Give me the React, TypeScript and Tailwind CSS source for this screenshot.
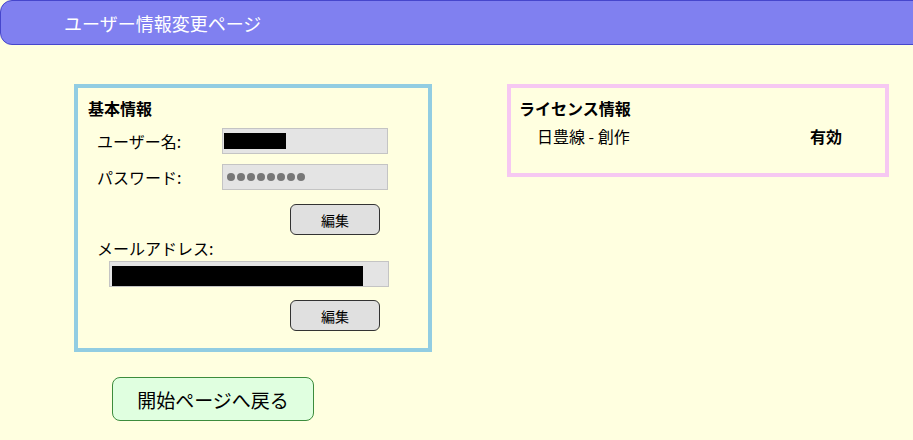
import React from "react";

const font = { fontFamily: '"Noto Sans CJK JP", "Noto Sans", sans-serif' };

function Field({ width, inset, children }: { width: string; inset: string; children?: React.ReactNode }) {
  return (
    <div className={`${width} ${inset} h-[26px] bg-[#e4e4e4] border border-[#c4c4c4] flex items-center`}>
      {children}
    </div>
  );
}

function EditButton() {
  return (
    <button className="w-[90px] h-[31px] bg-[#e0e0e0] border border-[#333] rounded-[6px] text-[14px] text-black leading-none">
      編集
    </button>
  );
}

export default function App() {
  return (
    <div className="w-[913px] h-[440px] bg-[#ffffe0] overflow-hidden text-black" style={font}>
      <header className="h-[45px] ml-0 mr-[-12px] bg-[#8080f0] border border-[#4646cc] rounded-l-[12px] flex items-center pl-[63px]">
        <h1 className="text-[18px] text-white font-normal leading-none">ユーザー情報変更ページ</h1>
      </header>

      <div className="flex pl-[74px] pt-[39px] gap-[75px]">
        <div className="flex flex-col">
          <section className="w-[358px] h-[268px] border-[4px] border-[#92cde2] pt-[10px] pl-[10px]">
            <h2 className="text-[16px] font-bold leading-[20px]">基本情報</h2>

            <div className="flex items-center mt-[10px]">
              <span className="w-[134px] pl-[9px] text-[16px] leading-none">ユーザー名:</span>
              <Field width="w-[166px]" inset="px-[1px]">
                <div className="w-[62px] h-[16px] bg-black" />
              </Field>
            </div>

            <div className="flex items-center mt-[10px]">
              <span className="w-[134px] pl-[9px] text-[16px] leading-none">パスワード:</span>
              <Field width="w-[166px]" inset="px-[4px]">
                <div className="flex gap-[2px]">
                  {Array.from({ length: 8 }).map((_, i) => (
                    <span key={i} className="w-[8px] h-[8px] rounded-full bg-[#777]" />
                  ))}
                </div>
              </Field>
            </div>

            <div className="flex justify-end pr-[48px] mt-[14px]">
              <EditButton />
            </div>

            <div className="pl-[9px] mt-[3px] text-[16px] leading-[20px]">メールアドレス:</div>

            <div className="pl-[21px] mt-[3px]">
              <Field width="w-[280px]" inset="px-[2px]">
                <div className="w-[251px] h-[20px] bg-black mt-[4px]" />
              </Field>
            </div>

            <div className="flex justify-end pr-[48px] mt-[13px]">
              <EditButton />
            </div>
          </section>

          <button className="ml-[38px] mt-[25px] w-[202px] h-[44px] bg-[#e0ffe0] border border-[#3c8c3c] rounded-[8px] text-[19px] leading-none">
            開始ページへ戻る
          </button>
        </div>

        <section className="w-[382px] h-[93px] border-[4px] border-[#f6c8f2] pt-[10px] pl-[8px]">
          <h2 className="text-[16px] font-bold leading-[20px]">ライセンス情報</h2>
          <div className="flex mt-[8px] text-[16px] leading-[20px]">
            <span className="w-[291px] pl-[18px]">日豊線 - 創作</span>
            <span className="font-bold">有効</span>
          </div>
        </section>
      </div>
    </div>
  );
}
